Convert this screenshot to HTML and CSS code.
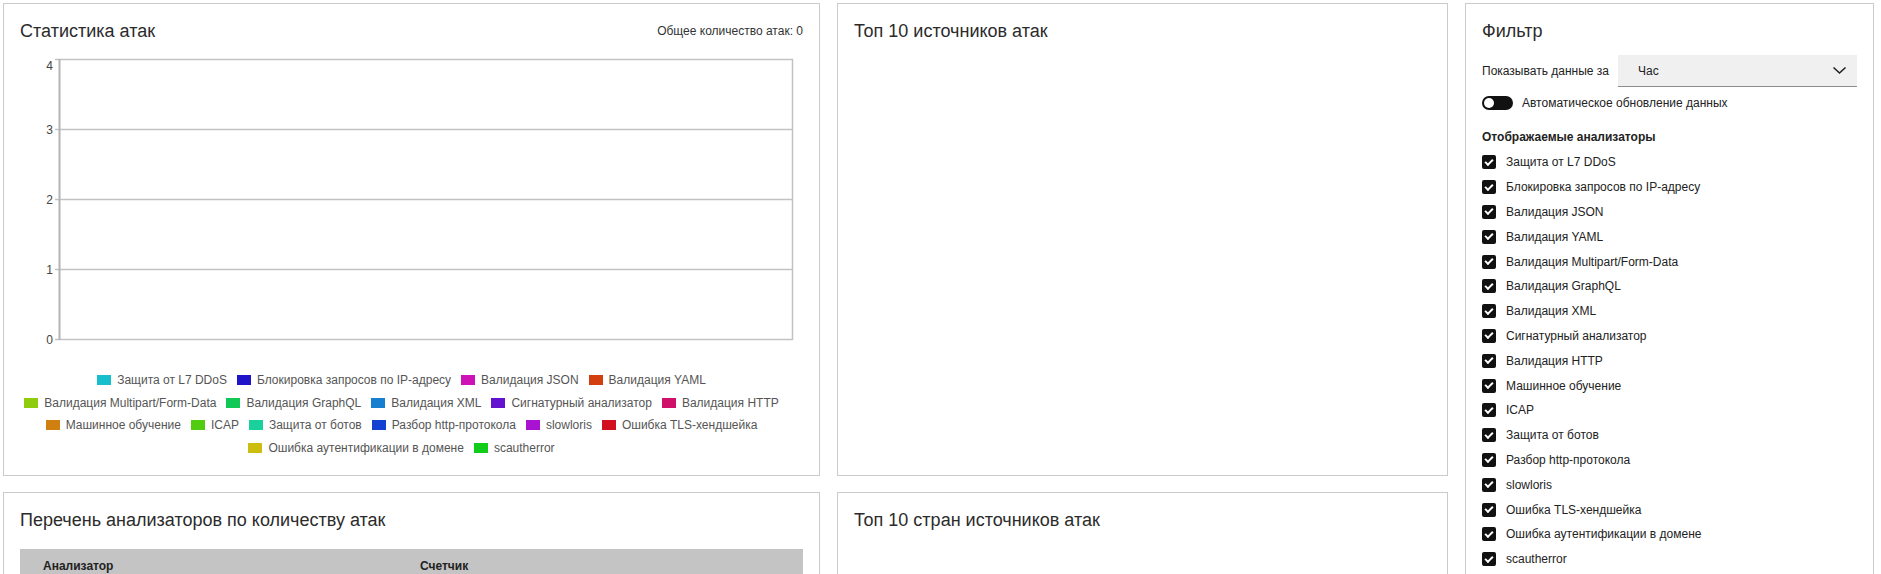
FILE: index.html
```html
<!DOCTYPE html>
<html lang="ru">
<head>
    <meta charset="UTF-8">
    <meta name="viewport" content="width=device-width, initial-scale=1.0">
    <title>Статистика атак</title>
    <link rel="stylesheet" href="styles.css">
</head>
<body>

<div class="dashboard">

    <!-- Attack statistics -->
    <section class="card stats">
        <div class="stats-head">
            <h2 class="card-title">Статистика атак</h2>
            <div class="total">Общее количество атак: 0</div>
        </div>

        <svg class="chart" width="783" height="300" viewBox="0 0 783 300">
            <g stroke="#c2c2c2" stroke-width="1.5">
                <line x1="35" y1="9.5" x2="773" y2="9.5"/>
                <line x1="35" y1="79.5" x2="773" y2="79.5"/>
                <line x1="35" y1="149.5" x2="773" y2="149.5"/>
                <line x1="35" y1="219.5" x2="773" y2="219.5"/>
                <line x1="35" y1="289.5" x2="773" y2="289.5"/>
                <line x1="772.5" y1="9" x2="772.5" y2="290"/>
            </g>
            <line x1="39.5" y1="9" x2="39.5" y2="290" stroke="#b4b4b4" stroke-width="2"/>
            <g class="ticks" text-anchor="end">
                <text x="33" y="20">4</text>
                <text x="33" y="83.8">3</text>
                <text x="33" y="153.8">2</text>
                <text x="33" y="223.8">1</text>
                <text x="33" y="293.8">0</text>
            </g>
        </svg>

        <div class="legend">
            <div class="legend-row">
                <span class="legend-item"><i class="swatch sw-ddos"></i>Защита от L7 DDoS</span>
                <span class="legend-item"><i class="swatch sw-ip"></i>Блокировка запросов по IP-адресу</span>
                <span class="legend-item"><i class="swatch sw-json"></i>Валидация JSON</span>
                <span class="legend-item"><i class="swatch sw-yaml"></i>Валидация YAML</span>
            </div>
            <div class="legend-row">
                <span class="legend-item"><i class="swatch sw-multipart"></i>Валидация Multipart/Form-Data</span>
                <span class="legend-item"><i class="swatch sw-graphql"></i>Валидация GraphQL</span>
                <span class="legend-item"><i class="swatch sw-xml"></i>Валидация XML</span>
                <span class="legend-item"><i class="swatch sw-signature"></i>Сигнатурный анализатор</span>
                <span class="legend-item"><i class="swatch sw-http"></i>Валидация HTTP</span>
            </div>
            <div class="legend-row">
                <span class="legend-item"><i class="swatch sw-ml"></i>Машинное обучение</span>
                <span class="legend-item"><i class="swatch sw-icap"></i>ICAP</span>
                <span class="legend-item"><i class="swatch sw-bots"></i>Защита от ботов</span>
                <span class="legend-item"><i class="swatch sw-parse"></i>Разбор http-протокола</span>
                <span class="legend-item"><i class="swatch sw-slowloris"></i>slowloris</span>
                <span class="legend-item"><i class="swatch sw-tls"></i>Ошибка TLS-хендшейка</span>
            </div>
            <div class="legend-row">
                <span class="legend-item"><i class="swatch sw-auth"></i>Ошибка аутентификации в домене</span>
                <span class="legend-item"><i class="swatch sw-scautherror"></i>scautherror</span>
            </div>
        </div>
    </section>

    <!-- Top sources -->
    <section class="card">
        <h2 class="card-title">Топ 10 источников атак</h2>
    </section>

    <!-- Filter -->
    <aside class="card filter">
        <h2 class="card-title">Фильтр</h2>

        <div class="period">
            <span class="period-label">Показывать данные за</span>
            <div class="select">
                <span>Час</span>
                <svg width="15" height="9" viewBox="0 0 15 9">
                    <polyline points="1.5,1.5 7.5,7 13.5,1.5" fill="none" stroke="#222" stroke-width="1.6"/>
                </svg>
            </div>
        </div>

        <div class="auto-update">
            <span class="switch"></span>
            <span>Автоматическое обновление данных</span>
        </div>

        <div class="section-label">Отображаемые анализаторы</div>

        <ul class="analyzer-list">
            <li><span class="check"></span>Защита от L7 DDoS</li>
            <li><span class="check"></span>Блокировка запросов по IP-адресу</li>
            <li><span class="check"></span>Валидация JSON</li>
            <li><span class="check"></span>Валидация YAML</li>
            <li><span class="check"></span>Валидация Multipart/Form-Data</li>
            <li><span class="check"></span>Валидация GraphQL</li>
            <li><span class="check"></span>Валидация XML</li>
            <li><span class="check"></span>Сигнатурный анализатор</li>
            <li><span class="check"></span>Валидация HTTP</li>
            <li><span class="check"></span>Машинное обучение</li>
            <li><span class="check"></span>ICAP</li>
            <li><span class="check"></span>Защита от ботов</li>
            <li><span class="check"></span>Разбор http-протокола</li>
            <li><span class="check"></span>slowloris</li>
            <li><span class="check"></span>Ошибка TLS-хендшейка</li>
            <li><span class="check"></span>Ошибка аутентификации в домене</li>
            <li><span class="check"></span>scautherror</li>
        </ul>
    </aside>

    <!-- Analyzers by attack count -->
    <section class="card lower">
        <h2 class="card-title">Перечень анализаторов по количеству атак</h2>
        <table class="analyzers-table">
            <thead>
                <tr>
                    <th class="col-name">Анализатор</th>
                    <th>Счетчик</th>
                </tr>
            </thead>
        </table>
    </section>

    <!-- Top countries -->
    <section class="card lower">
        <h2 class="card-title">Топ 10 стран источников атак</h2>
    </section>

</div>

</body>
</html>
```

FILE: styles.css
```css
* {
    margin: 0;
    padding: 0;
    box-sizing: border-box;
    font-family: "Liberation Sans", Arial, sans-serif;
}

body {
    background-color: #fff;
    color: #333;
    font-size: 12px;
}

.dashboard {
    display: grid;
    grid-template-columns: 817px 611px 409px;
    column-gap: 17px;
    row-gap: 16px;
    padding: 3px 0 0 3px;
}

.card {
    background-color: #fff;
    border: 1px solid #cbcbcb;
    padding: 16px;
}

.card-title {
    font-size: 18px;
    line-height: 22px;
    font-weight: normal;
    color: #2b2b2b;
}

.lower {
    min-height: 300px;
}

/* Attack statistics */
.stats-head {
    display: flex;
    justify-content: space-between;
    align-items: center;
}

.total {
    color: #333;
}

.chart {
    display: block;
    margin-top: 8px;
}

.ticks {
    font-size: 12px;
    fill: #444;
}

.legend {
    margin-top: 19px;
    margin-right: 20px;
}

.legend-row {
    display: flex;
    justify-content: center;
    align-items: center;
    column-gap: 10px;
    height: 22.5px;
    color: #555;
}

.legend-item {
    display: flex;
    align-items: center;
    white-space: nowrap;
}

.swatch {
    width: 14px;
    height: 10px;
    margin-right: 6px;
}

.sw-ddos { background-color: #17bfcd; }
.sw-ip { background-color: #2014c8; }
.sw-json { background-color: #cf12b5; }
.sw-yaml { background-color: #d1400e; }
.sw-multipart { background-color: #8fcb0e; }
.sw-graphql { background-color: #10c855; }
.sw-xml { background-color: #177fd0; }
.sw-signature { background-color: #6312d0; }
.sw-http { background-color: #d0116a; }
.sw-ml { background-color: #d08010; }
.sw-icap { background-color: #52cc10; }
.sw-bots { background-color: #1ad09c; }
.sw-parse { background-color: #1240d0; }
.sw-slowloris { background-color: #a912d0; }
.sw-tls { background-color: #d0101f; }
.sw-auth { background-color: #cdbd11; }
.sw-scautherror { background-color: #12cc1b; }

/* Analyzers table */
.analyzers-table {
    width: 100%;
    margin-top: 18px;
    border-collapse: collapse;
}

.analyzers-table th {
    background-color: #c4c4c4;
    text-align: left;
    font-weight: bold;
    color: #222;
    padding: 10px 23px;
}

.analyzers-table .col-name {
    width: 377px;
}

/* Filter */
.filter {
    grid-row: span 2;
    color: #222;
}

.period {
    display: flex;
    align-items: center;
    margin-top: 13px;
}

.period-label {
    margin-right: 9px;
}

.select {
    flex: 1;
    height: 32px;
    display: flex;
    justify-content: space-between;
    align-items: center;
    padding: 0 10px 0 20px;
    background-color: #f0f0f0;
    border-bottom: 1px solid #8c8c8c;
}

.auto-update {
    display: flex;
    align-items: center;
    height: 14px;
    margin-top: 9px;
}

.switch {
    position: relative;
    width: 31px;
    height: 14px;
    margin-right: 9px;
    border-radius: 7px;
    background-color: #111;
}

.switch::after {
    content: "";
    position: absolute;
    left: 2px;
    top: 2px;
    width: 10px;
    height: 10px;
    border-radius: 50%;
    background-color: #fff;
}

.section-label {
    margin-top: 20px;
    line-height: 14px;
    font-weight: bold;
}

.analyzer-list {
    list-style: none;
    margin-top: 6px;
}

.analyzer-list li {
    display: flex;
    align-items: center;
    height: 24.8px;
}

.check {
    position: relative;
    width: 14px;
    height: 14px;
    margin-right: 10px;
    border-radius: 2px;
    background-color: #111;
}

.check::after {
    content: "";
    position: absolute;
    left: 3px;
    top: 3.5px;
    width: 6px;
    height: 3px;
    border-left: 2px solid #fff;
    border-bottom: 2px solid #fff;
    transform: rotate(-45deg);
}
```
